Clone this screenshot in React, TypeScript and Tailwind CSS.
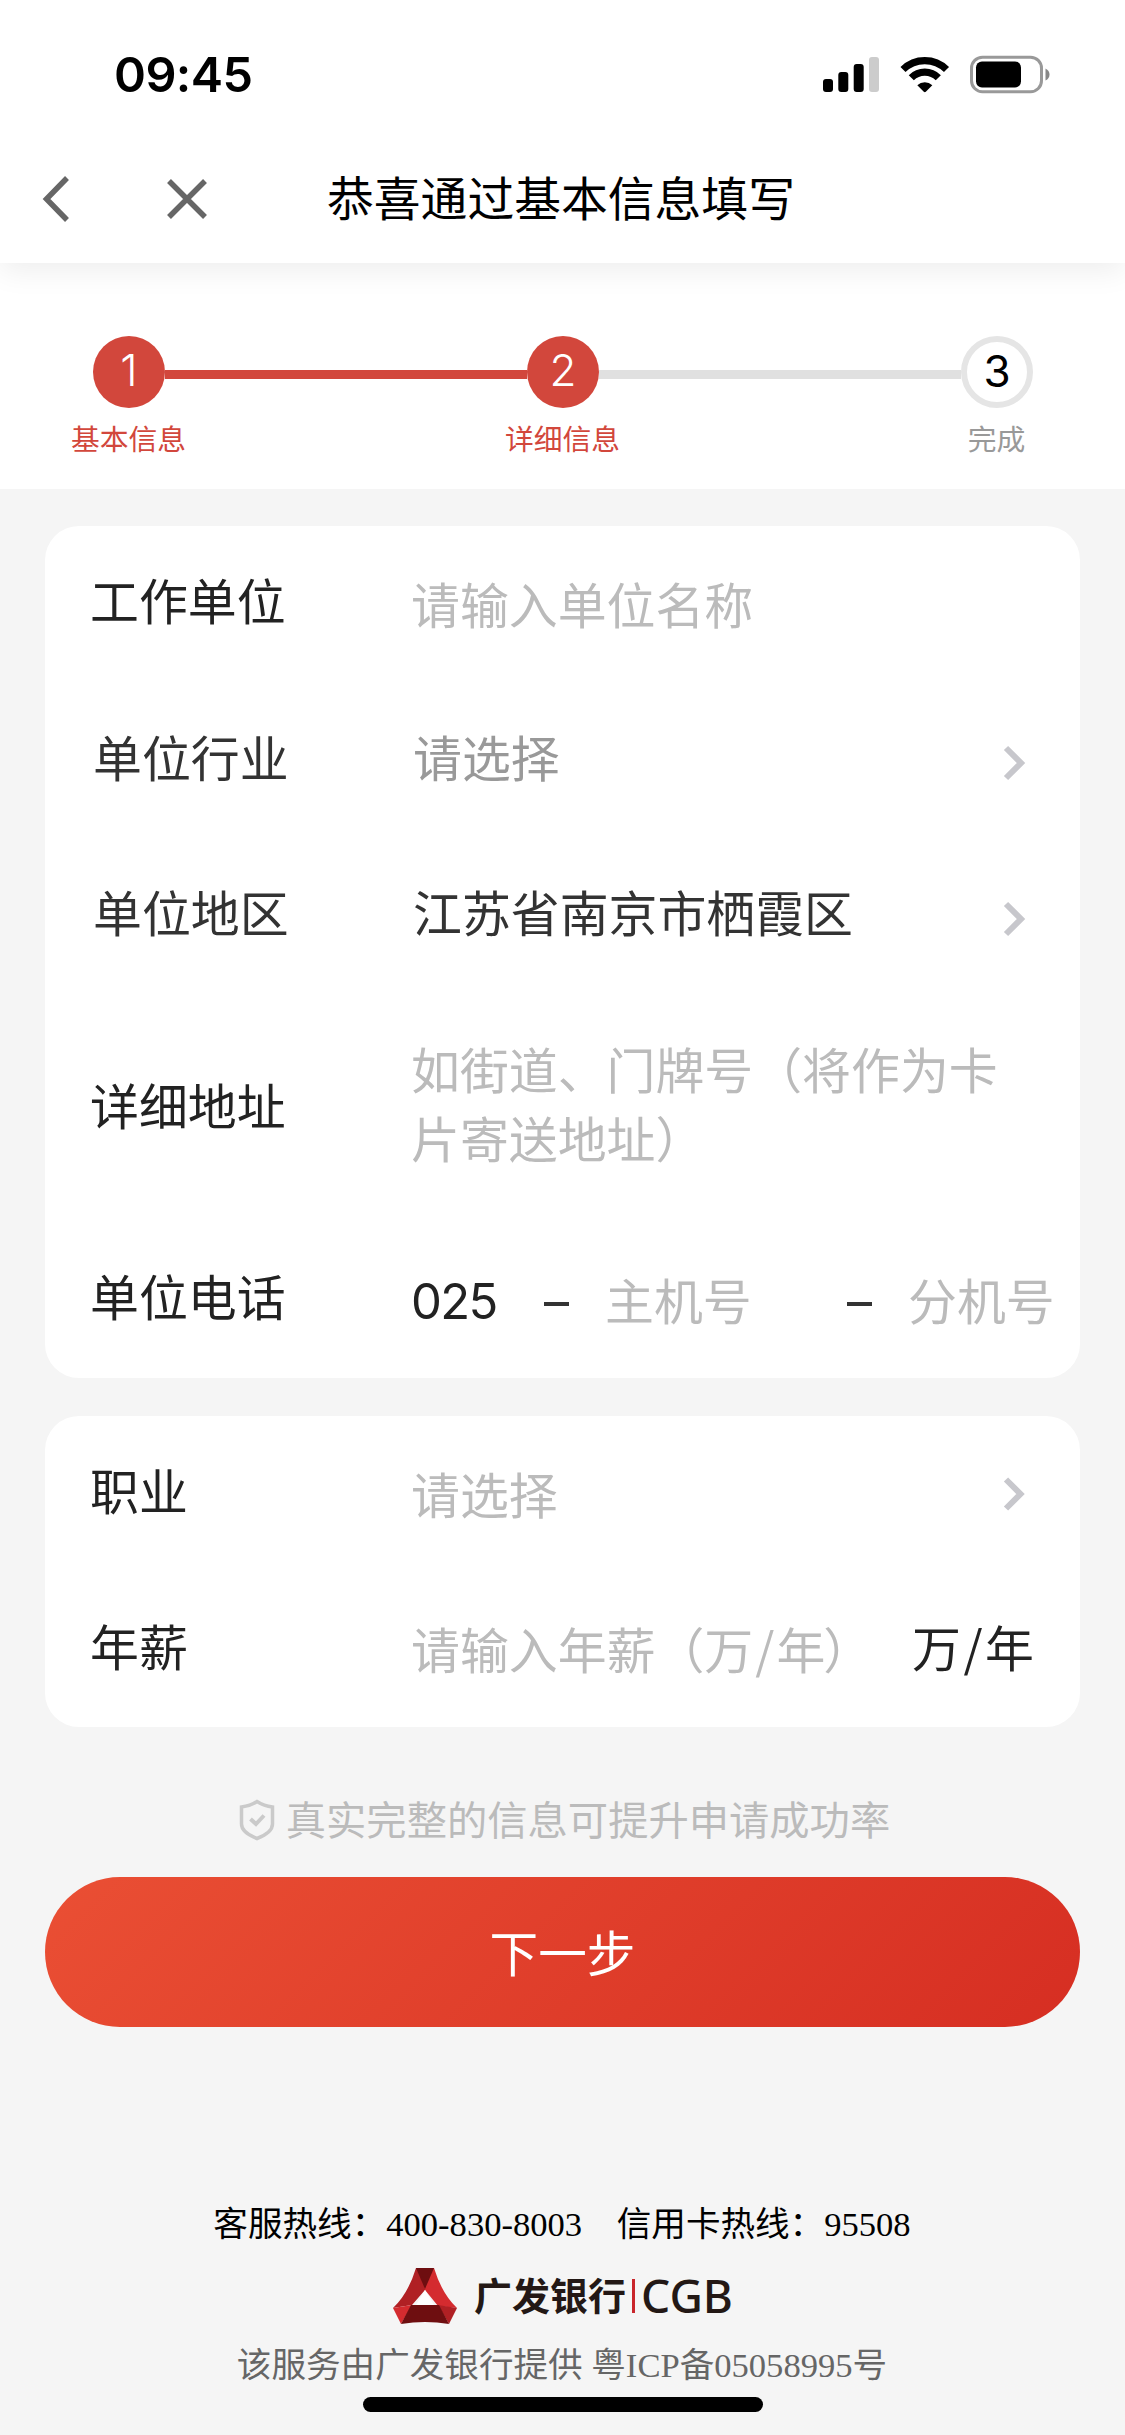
import { ReactNode } from "react";

interface IStepProps {
  num: number;
  label: string;
  done?: boolean;
}

interface IFormRowProps {
  label: string;
  children: ReactNode;
  height?: string;
  labelStyle?: string;
}

function App() {
  return (
    <div className="flex h-[2435px] w-[1125px] flex-col overflow-hidden bg-[#f5f5f5] font-['Noto_Sans_CJK_SC',sans-serif] leading-none">
      <div className="relative z-10 h-[263px] bg-white shadow-[0_8px_28px_rgba(0,0,0,0.07)]">
        <StatusBar />
        <NavBar />
      </div>
      <Steps />
      <main className="flex flex-col px-[45px] pt-[37px]">
        <section className="mb-[38px] h-[852px] rounded-[34px] bg-white text-[48.9px]">
          <FormRow label="工作单位" labelStyle="text-[#222] pb-[9px]">
            <Placeholder>请输入单位名称</Placeholder>
          </FormRow>
          <FormRow label="单位行业" labelStyle="text-[#333] pl-[3px] pb-2">
            <span className="ml-[2px] flex-1 pb-2 text-[#999]">请选择</span>
            <Chevron />
          </FormRow>
          <FormRow label="单位地区" labelStyle="text-[#333] pl-[3px] pb-[9px]">
            <span className="ml-[2px] flex-1 pb-[9px] text-[#333]">
              江苏省南京市栖霞区
            </span>
            <Chevron />
          </FormRow>
          <FormRow
            label="详细地址"
            height="h-[226px]"
            labelStyle="text-[#222] pb-[5px]"
          >
            <span className="pb-[10px] leading-[69.5px] text-[#bbb]">
              如街道、门牌号（将作为卡
              <br />
              片寄送地址）
            </span>
          </FormRow>
          <FormRow
            label="单位电话"
            height="h-[158px]"
            labelStyle="text-[#222] pb-[7px]"
          >
            <span className="w-[133px] pt-[5px] font-['Inter',sans-serif] text-[49px] tracking-[-1.6px] text-[#222]">
              025
            </span>
            <span className="mt-[10px] h-[4px] w-[25px] bg-[#333]" />
            <span className="ml-[36px] w-[242px] text-[#bbb]">主机号</span>
            <span className="mt-[10px] h-[4px] w-[25px] bg-[#333]" />
            <span className="ml-[36px] whitespace-nowrap text-[#bbb]">
              分机号
            </span>
          </FormRow>
        </section>

        <section className="h-[311px] rounded-[34px] bg-white text-[48.9px]">
          <FormRow label="职业" labelStyle="text-[#222] pb-[9px]">
            <Placeholder>请选择</Placeholder>
            <Chevron small />
          </FormRow>
          <FormRow
            label="年薪"
            height="h-[155px]"
            labelStyle="text-[#222] pb-2"
          >
            <Placeholder>
              请输入年薪（万<span className="mx-[2px]">/</span>年
              <span className="-ml-[2px]">）</span>
            </Placeholder>
            <span className="mr-[46px] pb-[6px] whitespace-nowrap text-[#222]">
              万<span className="mx-[2.5px]">/</span>年
            </span>
          </FormRow>
        </section>

        <p className="mt-[68px] flex h-[50px] items-center justify-center pl-[4px] text-[40.3px] text-[#bbb]">
          <ShieldIcon />
          <span className="ml-[11px] pb-[4px]">
            真实完整的信息可提升申请成功率
          </span>
        </p>
        <button className="mt-[32px] h-[150px] rounded-full bg-linear-[135deg,#ea4f34,#d62e22] pb-[2px] text-[48.6px] text-white">
          下一步
        </button>
      </main>
      <Footer />
    </div>
  );
}

export default App;

function StatusBar() {
  return (
    <div className="flex h-[150px] items-center justify-between pr-[75px] pl-[114px]">
      <span className="font-['Inter',sans-serif] text-[48.5px] font-semibold tracking-[-0.6px] text-black">
        09:45
      </span>
      <svg width="227" height="40" viewBox="0 0 227 40">
        <rect x="0" y="24" width="10" height="13" rx="3" />
        <rect x="15.3" y="17" width="10" height="20" rx="3" />
        <rect x="30.7" y="9" width="10" height="28" rx="3" />
        <rect x="46" y="2" width="10" height="35" rx="3" fill="#ccc" />
        <g fill="none" stroke="#000" strokeWidth="7.2">
          <path d="M80 14.500a31 31 0 0 1 43.500 0" />
          <path d="M88.300 22.800a19 19 0 0 1 27 0" />
        </g>
        <path d="M94.300 30.200a11 11 0 0 1 15 0l-6.500 6.600a1.500 1.500 0 0 1-2 0z" />
        <rect
          x="148.500"
          y="2.200"
          width="70"
          height="34.500"
          rx="11"
          fill="none"
          stroke="#999"
          strokeWidth="3"
        />
        <rect x="153" y="6.500" width="45" height="26" rx="6" />
        <path d="M222.500 13.500q4 2 4 6t-4 6z" fill="#888" />
      </svg>
    </div>
  );
}

function NavBar() {
  return (
    <div className="flex h-[98px] items-center">
      <svg
        className="ml-[41px]"
        width="30"
        height="50"
        viewBox="0 0 30 50"
        fill="none"
        stroke="#666"
        strokeWidth="5.500"
      >
        <path d="M26 4L5.500 25l20.500 21" />
      </svg>
      <svg
        className="ml-[95px]"
        width="42"
        height="42"
        viewBox="0 0 42 42"
        stroke="#666"
        strokeWidth="5.500"
      >
        <path d="M3 3l36 36M39 3l-36 36" />
      </svg>
      <h1 className="ml-[119px] pb-[5px] text-[46.8px] text-black">
        恭喜通过基本信息填写
      </h1>
    </div>
  );
}

function Steps() {
  return (
    <div className="flex h-[226px] justify-between bg-white pr-[56px] pl-[57px] pt-[73px]">
      <Step num={1} label="基本信息" done />
      <span className="-mx-[36px] mt-[34px] h-[9px] flex-1 bg-[#d2473c]" />
      <Step num={2} label="详细信息" done />
      <span className="-mx-[36px] mt-[34px] h-[9px] flex-1 bg-[#e0e0e0]" />
      <Step num={3} label="完成" />
    </div>
  );
}

function Step({ num, label, done }: IStepProps) {
  return (
    <div className="flex w-[144px] flex-col items-center">
      <span
        className={
          done
            ? "z-10 flex size-[72px] items-center justify-center rounded-full bg-[#d2473c] pb-[4px] font-['Inter',sans-serif] text-[44px] font-light text-white"
            : "z-10 flex size-[72px] items-center justify-center rounded-full border-[6px] border-[#e5e5e5] bg-white pb-[3px] font-['Inter',sans-serif] text-[44px] text-black"
        }
      >
        {num}
      </span>
      <span
        className={
          done
            ? "mt-[16px] mr-[1px] text-[28.8px] text-[#d2473c]"
            : "mt-[16px] mr-[1px] text-[28.8px] text-[#999]"
        }
      >
        {label}
      </span>
    </div>
  );
}

function FormRow({
  label,
  children,
  height = "h-[156px]",
  labelStyle = "",
}: IFormRowProps) {
  return (
    <div className={`flex items-center pl-[45px] ${height}`}>
      <label className={`w-[321px] shrink-0 ${labelStyle}`}>{label}</label>
      {children}
    </div>
  );
}

function Placeholder({ children }: { children: ReactNode }) {
  return (
    <span className="flex-1 pb-[2px] whitespace-nowrap text-[#bbb]">
      {children}
    </span>
  );
}

function Chevron({ small }: { small?: boolean }) {
  return (
    <svg
      className={small ? "mr-[52px]" : "mt-[5px] mr-[52px]"}
      width="26"
      height="38"
      viewBox="0 0 26 38"
      fill="none"
      stroke="#c7c7cc"
      strokeWidth="6"
    >
      <path d={small ? "M4 4.500l14.500 14.500-14.500 14.500" : "M4 4l15 15L4 34"} />
    </svg>
  );
}

function ShieldIcon() {
  return (
    <svg
      width="36"
      height="42"
      viewBox="0 0 36 42"
      fill="none"
      stroke="#cacaca"
      strokeWidth="3.500"
    >
      <path d="M18 2.500Q25 7 33.500 8v17q0 8.500-15.500 14.500Q2.500 33.500 2.500 25V8Q11 7 18 2.500z" />
      <path d="M11.500 20l5.500 5 8-8.500" strokeWidth="4" />
    </svg>
  );
}

function Footer() {
  return (
    <footer className="flex flex-1 flex-col items-center pt-[177px] font-['Liberation_Serif','Noto_Sans_CJK_SC',serif] text-[34.6px]">
      <p className="h-[40px] pr-[1px] leading-[40px] whitespace-pre text-black">
        客服热线：400-830-8003{"    "}信用卡热线：95508
      </p>
      <div className="mt-[22px] flex h-[60px] items-center font-['Noto_Sans_CJK_SC',sans-serif] text-[#231815]">
        <svg width="66" height="58" viewBox="0 0 66 58">
          <path d="M24 1h18l-9 22L20 38 1 41Q16 27 24 1z" fill="#b02024" />
          <path d="M42 1q8 26 23 40l-19-2L33 23 30 12z" fill="#d42b2f" />
          <path d="M24 1h18l-9 21z" fill="#6e0e10" />
          <path d="M1 41l19-3L9 57z" fill="#d42b2f" />
          <path d="M65 41l-19-3 11 19z" fill="#b02024" />
          <path d="M19 38h28l10 19q-24-4-48 0z" fill="#6e0e10" />
          <path d="M33 23l9 15H24z" fill="#fff" />
        </svg>
        <span className="ml-[16px] pb-[5px] text-[38px] font-bold">
          广发银行
        </span>
        <span className="ml-[6px] h-[34px] w-[3px] bg-[#c9252b]" />
        <span className="ml-[6px] pb-[2px] font-['Noto_Sans',sans-serif] text-[46px] font-medium">
          CGB
        </span>
      </div>
      <p className="mt-[19px] h-[40px] pr-[1px] leading-[40px] text-[#666]">
        该服务由广发银行提供 粤ICP备05058995号
      </p>
      <div className="mt-[12px] h-[15px] w-[400px] rounded-full bg-black" />
    </footer>
  );
}
